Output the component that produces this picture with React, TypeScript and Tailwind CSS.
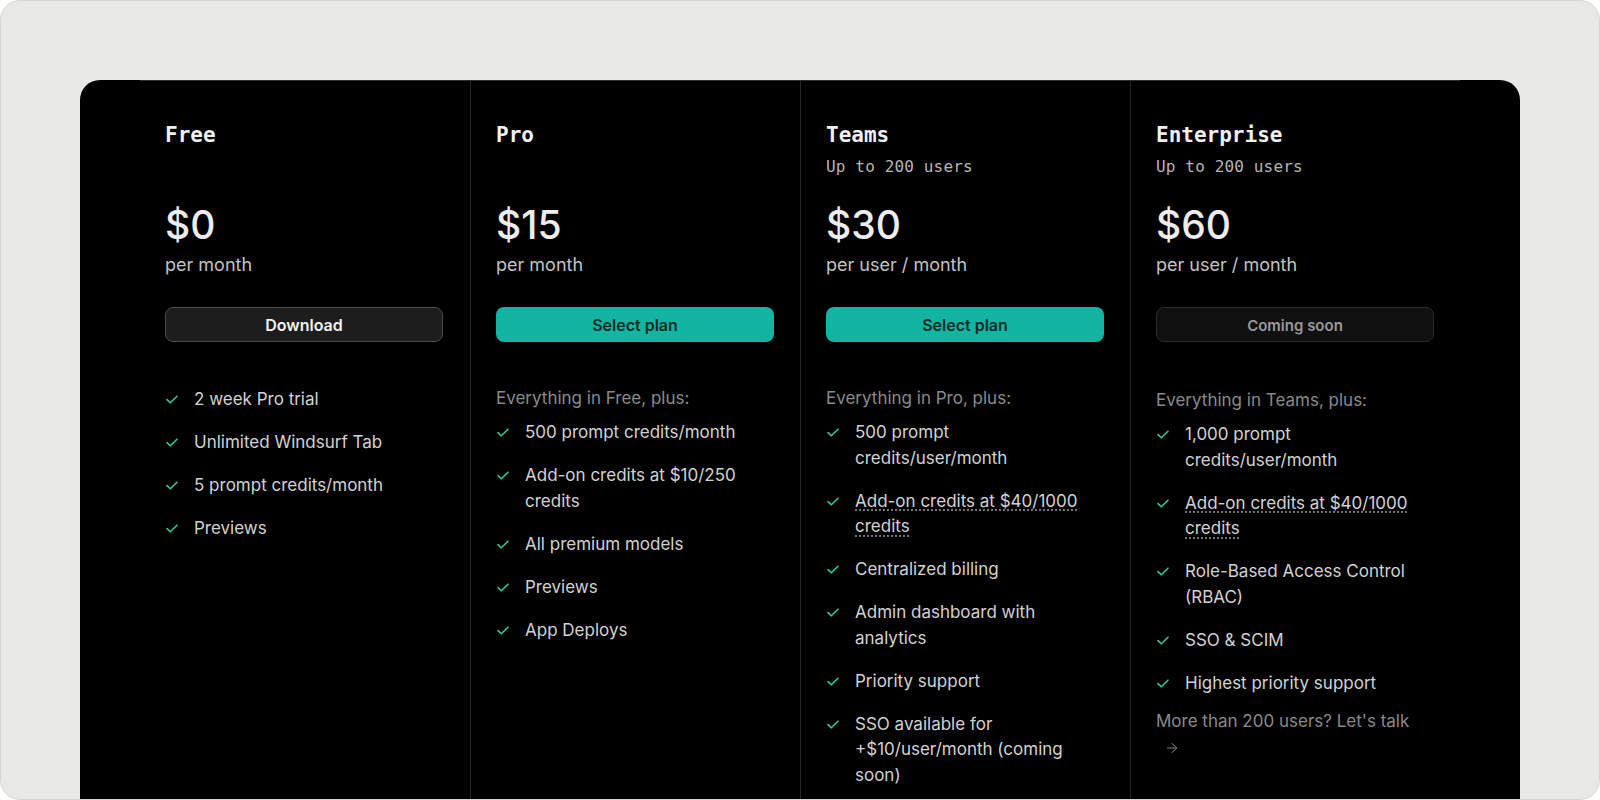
import { ArrowRight } from 'lucide-react';

type Feature = { text: string; dotted?: boolean };

type Plan = {
  name: string;
  subtitle?: string;
  price: string;
  period: string;
  button: 'download' | 'select' | 'soon';
  header?: string;
  features: Feature[];
  footer?: string;
};

const plans: Plan[] = [
  {
    name: 'Free',
    price: '$0',
    period: 'per month',
    button: 'download',
    features: [
      { text: '2 week Pro trial' },
      { text: 'Unlimited Windsurf Tab' },
      { text: '5 prompt credits/month' },
      { text: 'Previews' },
    ],
  },
  {
    name: 'Pro',
    price: '$15',
    period: 'per month',
    button: 'select',
    header: 'Everything in Free, plus:',
    features: [
      { text: '500 prompt credits/month' },
      { text: 'Add-on credits at $10/250 credits' },
      { text: 'All premium models' },
      { text: 'Previews' },
      { text: 'App Deploys' },
    ],
  },
  {
    name: 'Teams',
    subtitle: 'Up to 200 users',
    price: '$30',
    period: 'per user / month',
    button: 'select',
    header: 'Everything in Pro, plus:',
    features: [
      { text: '500 prompt credits/user/month' },
      { text: 'Add-on credits at $40/1000 credits', dotted: true },
      { text: 'Centralized billing' },
      { text: 'Admin dashboard with analytics' },
      { text: 'Priority support' },
      { text: 'SSO available for +$10/user/month (coming soon)' },
    ],
  },
  {
    name: 'Enterprise',
    subtitle: 'Up to 200 users',
    price: '$60',
    period: 'per user / month',
    button: 'soon',
    header: 'Everything in Teams, plus:',
    features: [
      { text: '1,000 prompt credits/user/month' },
      { text: 'Add-on credits at $40/1000 credits', dotted: true },
      { text: 'Role-Based Access Control (RBAC)' },
      { text: 'SSO & SCIM' },
      { text: 'Highest priority support' },
    ],
    footer: "More than 200 users? Let's talk",
  },
];

function Check() {
  return (
    <svg width="12" height="9" viewBox="0 0 12 9" fill="none">
      <path d="M1 4.6 4.3 7.8 11 1.2" stroke="#38c79b" strokeWidth="1.6" strokeLinecap="round" strokeLinejoin="round" />
    </svg>
  );
}

function PlanButton({ kind }: { kind: Plan['button'] }) {
  if (kind === 'download') {
    return (
      <button className="h-[35px] w-full rounded-lg border border-[#4a4a4a] bg-[#1d1d1d] text-[16px] font-semibold text-[#f2f2f2]">
        Download
      </button>
    );
  }
  if (kind === 'select') {
    return (
      <button className="h-[35px] w-full rounded-lg bg-[#12b5a1] text-[16px] font-semibold text-[#0b2b27]">
        Select plan
      </button>
    );
  }
  return (
    <button className="h-[35px] w-full rounded-lg border border-[#2c2c2c] bg-[#101010] pt-[3px] text-[15px] font-semibold text-[#9a9a9a]">
      Coming soon
    </button>
  );
}

function PlanColumn({ plan, first }: { plan: Plan; first: boolean }) {
  const listGap = !plan.header ? 'mt-[45px]' : plan.button === 'soon' ? 'mt-[46px]' : 'mt-[44px]';
  return (
    <div
      className={
        first
          ? 'w-[330px] pl-[25px] pr-[27px] pt-[40px]'
          : 'w-[330px] border-l border-[#262626] pl-[25px] pr-[26px] pt-[40px]'
      }
    >
      <h2 className="font-['DejaVu_Sans_Mono',monospace] text-[21px] font-bold leading-[28px] text-[#f0f0f0]">
        {plan.name}
      </h2>
      <p className="mt-[6px] h-[24px] font-['DejaVu_Sans_Mono',monospace] text-[16px] leading-[24px] tracking-[0.15px] text-[#b5b5b5]">
        {plan.subtitle}
      </p>
      <p className="mt-[26px] text-[39px] font-medium leading-[39px] text-[#ededed]">{plan.price}</p>
      <p className="mt-[8px] text-[18px] leading-[26px] text-[#c2c2c2]">{plan.period}</p>
      <div className="mt-[29px]">
        <PlanButton kind={plan.button} />
      </div>
      <div className={listGap}>
        {plan.header && (
          <p className="mb-[8.4px] text-[17px] leading-[25.6px] text-[#8a8a8a]">{plan.header}</p>
        )}
        <ul className="flex flex-col gap-[17.4px]">
          {plan.features.map((f) => (
            <li key={f.text} className="flex items-start text-[17px] leading-[25.6px] text-[#d2d2d2]">
              <span className="flex h-[25.6px] w-[29px] flex-none items-center pl-[1px]">
                <Check />
              </span>
              <span
                className={
                  f.dotted ? 'underline decoration-dotted decoration-[#9a9a9a] underline-offset-[3px]' : ''
                }
              >
                {f.text}
              </span>
            </li>
          ))}
        </ul>
        {plan.footer && (
          <p className="mt-[13px] text-[17px] leading-[25.6px] text-[#8a8a8a]">
            {plan.footer}{' '}
            <ArrowRight size={16} strokeWidth={1.4} className="ml-2 inline-block align-[-3px]" />
          </p>
        )}
      </div>
    </div>
  );
}

export default function App() {
  return (
    <div className="h-[800px] w-[1600px] overflow-hidden rounded-[20px] border border-[#d3d3d1] bg-[#e8e8e6] px-[79px] pt-[79px] font-['Inter',sans-serif]">
      <div className="flex h-[740px] justify-center rounded-t-[20px] bg-black">
        <div className="flex h-full w-[1320px] border-t border-[#2e2e2e]">
          {plans.map((p, i) => (
            <PlanColumn key={p.name} plan={p} first={i === 0} />
          ))}
        </div>
      </div>
    </div>
  );
}
